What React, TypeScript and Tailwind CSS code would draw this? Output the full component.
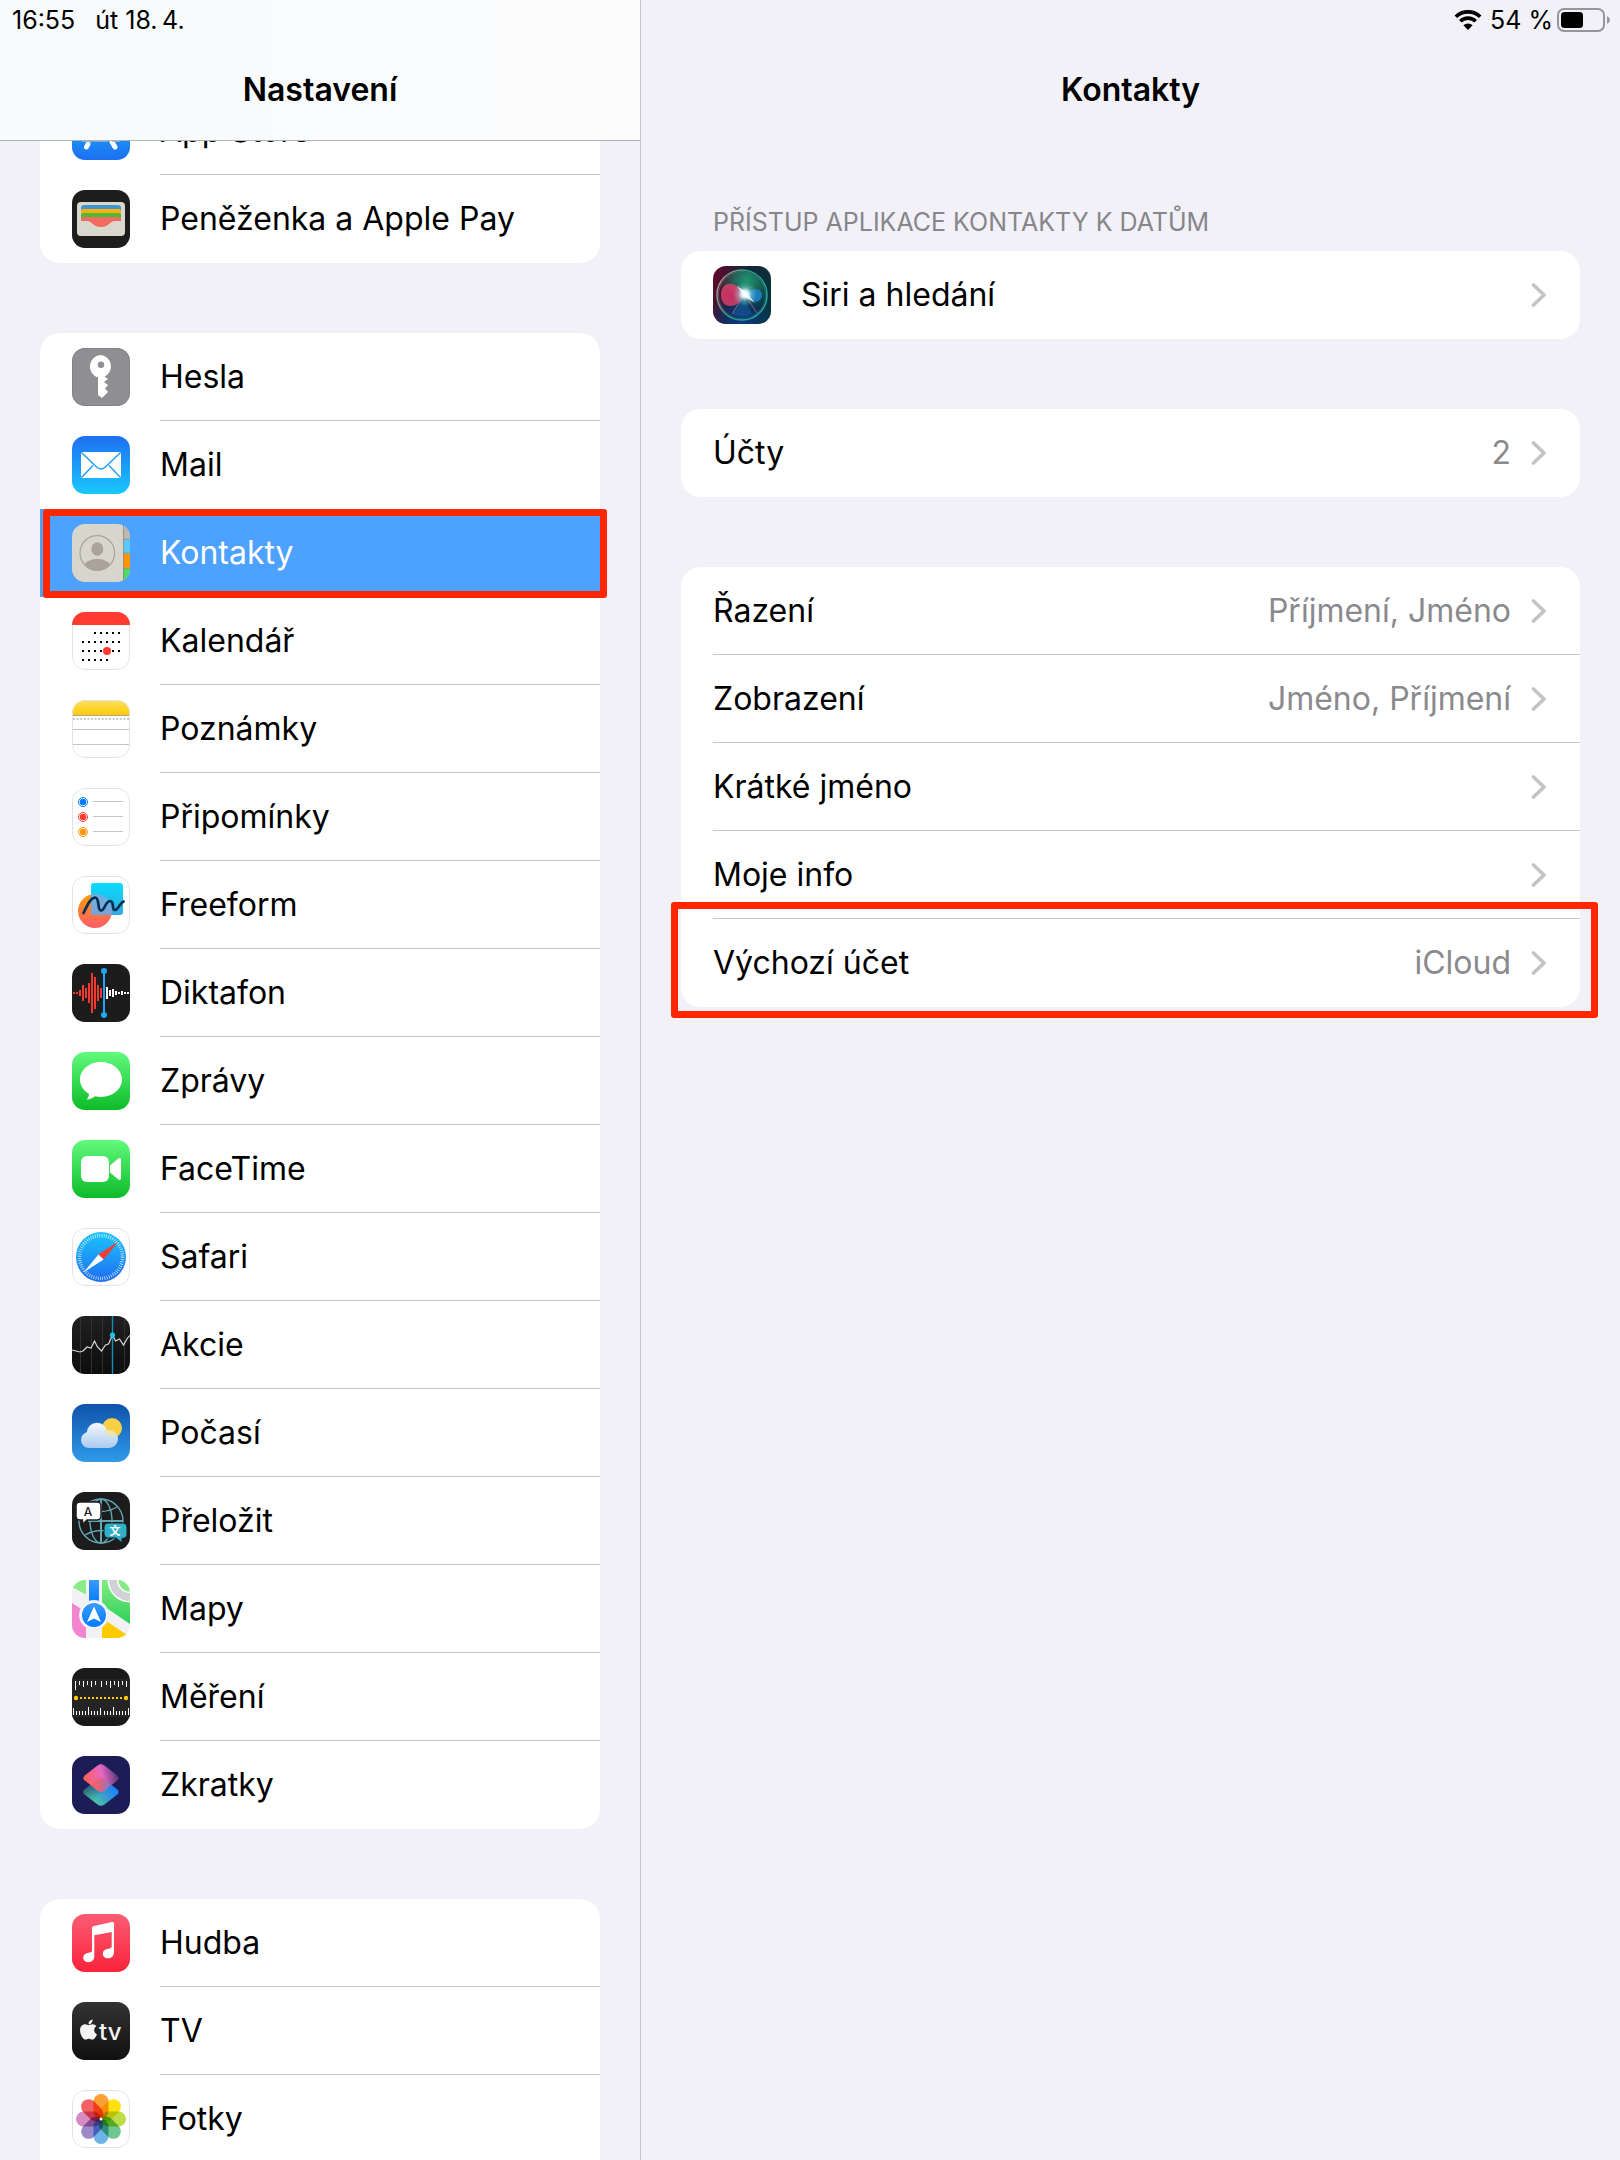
import React, { ReactNode } from "react";
import { FaApple } from "react-icons/fa";

type GradientProps = { id: string; from: string; to: string };

function VerticalGradient({ id, from, to }: GradientProps) {
  return (
    <linearGradient id={id} x1="0" y1="0" x2="0" y2="1">
      <stop offset="0" stopColor={from} />
      <stop offset="1" stopColor={to} />
    </linearGradient>
  );
}

function Tile({ children, outlined = false }: { children: ReactNode; outlined?: boolean }) {
  return (
    <svg viewBox="0 0 58 58" aria-hidden="true" className="isolate size-[58px] shrink-0 overflow-hidden rounded-[13px]">
      {children}
      {outlined && <rect x="0.5" y="0.5" width="57" height="57" rx="12.5" fill="none" stroke="#e2e2e4" />}
    </svg>
  );
}

const AppStoreIcon = () => (
  <Tile>
    <defs><VerticalGradient id="appstore" from="#19c3fb" to="#1e6ff1" /></defs>
    <rect width="58" height="58" fill="url(#appstore)" />
    <g stroke="#fff" strokeWidth="5" strokeLinecap="round">
      <path d="M27 13l14 24M40 40l3 5M31 13L19 34M16 42l-1.500 3M10 36h24M41 36h7" />
    </g>
    <path d="M10 39h26M40 39h8" stroke="#9db8cc" strokeWidth="1.500" />
  </Tile>
);

const WalletIcon = () => (
  <Tile>
    <rect width="58" height="58" fill="#1d1d1d" />
    <rect x="5" y="12" width="48" height="34" rx="4" fill="#dad7cc" />
    <path d="M9 18a3 3 0 013-3h34a3 3 0 013 3v13H9z" fill="#3c97d0" />
    <path d="M9 21a2 2 0 012-2h36a2 2 0 012 2v10H9z" fill="#fdb00b" />
    <path d="M9 25a2 2 0 012-2h36a2 2 0 012 2v6H9z" fill="#4dbb3a" />
    <path d="M9 29a2 2 0 012-2h36a2 2 0 012 2v2h-6c-6 0-5 6-14 6s-8-6-14-6H9z" fill="#f26b5e" />
  </Tile>
);

const KeyIcon = () => (
  <Tile>
    <rect width="58" height="58" fill="#8e8e93" />
    <rect x="0.5" y="0.5" width="57" height="57" rx="12.5" fill="none" stroke="#828287" />
    <path fill="#fff" fillRule="evenodd" d="M29 7a11.500 11.500 0 00-3 22.500V47l4 3 6-6-3-3.500 3-3.500-4-3 4-3-3-2v-.500A11.500 11.500 0 0029 7zm0 6.500a3.200 3.200 0 110 6.400 3.200 3.200 0 010-6.400z" />
  </Tile>
);

const MailIcon = () => (
  <Tile>
    <defs><VerticalGradient id="mail" from="#1e6ff2" to="#1ac8fc" /></defs>
    <rect width="58" height="58" fill="url(#mail)" />
    <rect x="9" y="16" width="40" height="26" rx="1.500" fill="#fff" />
    <path d="M9.500 16.500l14.500 14q5 5 10 0l14.500-14M9.500 41.500L21 29.500M48.500 41.500L37 29.500" fill="none" stroke="#1f9cf5" strokeWidth="1.400" />
  </Tile>
);

const ContactsIcon = () => (
  <Tile>
    <defs><clipPath id="contactClip"><circle cx="25.300" cy="29" r="17.500" /></clipPath></defs>
    <rect width="58" height="58" fill="#d8d5cc" />
    <rect x="51" width="7" height="15" fill="#bcb9b0" />
    <rect x="51" y="15.500" width="7" height="14" fill="#5ac8fa" />
    <rect x="51" y="29.500" width="7" height="15" fill="#ff9500" />
    <rect x="51" y="44.500" width="7" height="14" fill="#4cd964" />
    <path d="M51.500 0v58M51 15.300h7M51 29.300h7M51 44.300h7" stroke="#8d8a82" strokeWidth="0.800" />
    <circle cx="25.300" cy="29" r="17.300" fill="none" stroke="#aaa39b" strokeWidth="1.200" />
    <g clipPath="url(#contactClip)" fill="#aaa39b">
      <ellipse cx="25.300" cy="25" rx="6" ry="6.800" />
      <ellipse cx="25.300" cy="44" rx="14" ry="9.300" />
    </g>
  </Tile>
);

const calendarDots = [
  { y: 21, from: 2, to: 6 },
  { y: 30, from: 0, to: 6 },
  { y: 39, from: 0, to: 6 },
  { y: 48, from: 0, to: 4 },
];

const CalendarIcon = () => (
  <Tile>
    <rect x="0.5" y="0.5" width="57" height="57" rx="12.5" fill="#fff" stroke="#e2e2e4" />
    {calendarDots.map((row) =>
      Array.from({ length: row.to - row.from + 1 }, (_, i) => (
        <rect key={`${row.y}-${i}`} x={10 + (row.from + i) * 6} y={row.y - 1} width="2" height="2" fill="#000" />
      ))
    )}
    <circle cx="35" cy="39" r="4" fill="#ff3b30" />
    <rect width="58" height="13" fill="#ff3b30" />
  </Tile>
);

const NotesIcon = () => (
  <Tile outlined>
    <defs><VerticalGradient id="notes" from="#fde05e" to="#fccb05" /></defs>
    <rect width="58" height="58" fill="#fff" />
    <rect width="58" height="15" fill="url(#notes)" />
    <path d="M0 15.500h58" stroke="#a9a48f" />
    <path d="M1 19h58" stroke="#c9c9cb" strokeWidth="2" strokeDasharray="2 1.600" />
    <path d="M0 29.500h58M0 44.500h58" stroke="#c4c4c6" />
  </Tile>
);

const RemindersIcon = () => (
  <Tile outlined>
    <rect width="58" height="58" fill="#fff" />
    {[{ y: 14, color: "#007aff" }, { y: 29, color: "#ff3b30" }, { y: 44, color: "#ff9500" }].map((item) => (
      <g key={item.y}>
        <circle cx="11" cy={item.y} r="4.500" fill="none" stroke={item.color} />
        <circle cx="11" cy={item.y} r="3.200" fill={item.color} />
        <path d={`M21 ${item.y - 0.5}h30`} stroke="#c4c4c6" />
      </g>
    ))}
  </Tile>
);

const FreeformIcon = () => (
  <Tile outlined>
    <defs>
      <VerticalGradient id="freeformSquare" from="#06dcfd" to="#36a9e0" />
      <VerticalGradient id="freeformCircle" from="#ff9f0a" to="#ff5a6a" />
      <clipPath id="freeformClip"><rect x="19" y="7" width="32" height="32" rx="3" /></clipPath>
    </defs>
    <rect width="58" height="58" fill="#fff" />
    <circle cx="23" cy="35" r="17" fill="url(#freeformCircle)" />
    <rect x="19" y="7" width="32" height="32" rx="3" fill="url(#freeformSquare)" />
    <circle cx="23" cy="35" r="17" fill="#a99fd6" opacity="0.600" clipPath="url(#freeformClip)" />
    <path d="M11.500 37C15 30 18 22 23 21.500c5 0 2 13 6 13s4-9 9-9.500c5 0 1 9 5 9 3 0 5-7 8.500-8.500" fill="none" stroke="#003050" strokeWidth="2.700" strokeLinecap="round" />
  </Tile>
);

const redBars = [2, 2, 6, 16, 10, 20, 40, 32, 16, 10];
const whiteBars = [12, 6, 8, 4, 2, 4, 2, 2];

const VoiceMemosIcon = () => (
  <Tile>
    <rect width="58" height="58" fill="#1c1c1c" />
    {redBars.map((h, i) => (
      <rect key={i} x={1 + i * 3} y={29 - h / 2} width="2" height={h} fill="#f5392f" />
    ))}
    {whiteBars.map((h, i) => (
      <rect key={i} x={34 + i * 3} y={29 - h / 2} width="2" height={h} fill="#fff" />
    ))}
    <path d="M32 7v44" stroke="#1ba7f5" strokeWidth="2" />
    <circle cx="32" cy="7" r="3" fill="#1ba7f5" />
    <circle cx="32" cy="51" r="3" fill="#1ba7f5" />
  </Tile>
);

const MessagesIcon = () => (
  <Tile>
    <defs><VerticalGradient id="messages" from="#62fa7c" to="#0cbc29" /></defs>
    <rect width="58" height="58" fill="url(#messages)" />
    <path fill="#fff" d="M29 10C17.400 10 8 17.800 8 27.500c0 6 3.600 11.200 9 14.400-.300 2.500-1 4-2.300 5.500 3.500 0 6-1.200 8.300-3.200 1.900.500 3.900.700 6 .700 11.600 0 21-7.800 21-17.400S40.600 10 29 10z" />
  </Tile>
);

const FaceTimeIcon = () => (
  <Tile>
    <defs><VerticalGradient id="facetime" from="#62fa7c" to="#0cbc29" /></defs>
    <rect width="58" height="58" fill="url(#facetime)" />
    <rect x="9" y="16" width="28" height="26" rx="6" fill="#fff" />
    <path fill="#fff" d="M38 25.500l8-6.800c1.500-1.200 3-.700 3 1.200v18.200c0 1.900-1.500 2.400-3 1.200l-8-6.800z" />
  </Tile>
);

const SafariIcon = () => (
  <Tile outlined>
    <defs><VerticalGradient id="safari" from="#1bc5fc" to="#1f6df1" /></defs>
    <rect width="58" height="58" fill="#fff" />
    <circle cx="29" cy="29" r="25" fill="url(#safari)" />
    <circle cx="29" cy="29" r="21.500" fill="none" stroke="#fff" strokeWidth="3.500" strokeDasharray="0.700 1.551" opacity="0.850" />
    <path d="M46.500 13.500L31.500 31.500 26.500 26.500z" fill="#ff3b30" />
    <path d="M11.500 44.500L26.500 26.500 31.500 31.500z" fill="#fff" />
  </Tile>
);

const StocksIcon = () => (
  <Tile>
    <defs><VerticalGradient id="stocks" from="#202020" to="#0d0d0d" /></defs>
    <rect width="58" height="58" fill="url(#stocks)" />
    <path d="M8.500 0v58M19.500 0v58M30.500 0v58M52.500 0v58" stroke="#303030" />
    <path d="M40.500 0v58" stroke="#1390b8" strokeWidth="1.400" />
    <path d="M0 34l4 1 4 1 3-1 4-4 4 1 3.500-7 3 6 4 4 4-6 3-1 4-9 3 6 4-2 4 6 4-7 3-3" fill="none" stroke="#d8d8d8" strokeWidth="1.200" />
    <circle cx="40.500" cy="19" r="2.600" fill="#1bc4f0" />
  </Tile>
);

const WeatherIcon = () => (
  <Tile>
    <defs>
      <VerticalGradient id="weather" from="#0f52ac" to="#2f9be8" />
      <linearGradient id="cloud" gradientUnits="userSpaceOnUse" x1="0" y1="19" x2="0" y2="44">
        <stop offset="0" stopColor="#f4f8ff" />
        <stop offset="1" stopColor="#aacbee" />
      </linearGradient>
      <radialGradient id="sunGlow" gradientUnits="userSpaceOnUse" cx="40" cy="24" r="11">
        <stop offset="0.300" stopColor="#f8e287" stopOpacity="0.900" />
        <stop offset="1" stopColor="#f8e287" stopOpacity="0" />
      </radialGradient>
    </defs>
    <rect width="58" height="58" fill="url(#weather)" />
    <circle cx="40" cy="24" r="10" fill="#f9cf45" />
    <g fill="url(#cloud)">
      <circle cx="25" cy="29" r="10.300" />
      <circle cx="17" cy="36" r="8" />
      <circle cx="37" cy="35" r="9" />
      <path d="M17 34h20v10H17z" />
    </g>
    <circle cx="37" cy="35" r="9" fill="url(#sunGlow)" />
  </Tile>
);

const TranslateIcon = () => (
  <Tile>
    <rect width="58" height="58" fill="#1c1c1c" />
    <g fill="none" stroke="#64a5b4" strokeWidth="1.400">
      <circle cx="29" cy="29" r="22" />
      <ellipse cx="29" cy="29" rx="11" ry="22" />
      <path d="M13 15q16 9 32 0M13 43q16-9 32 0" />
    </g>
    <path d="M29 7v44M16 29h35" stroke="#64a5b4" strokeWidth="2" />
    <path d="M8 10h17a4 4 0 014 4v10a4 4 0 01-4 4H15l-4.500 4.500V28H8a4 4 0 01-4-4V14a4 4 0 014-4z" fill="#fff" stroke="#1c1c1c" strokeWidth="1.500" />
    <path d="M36 31h15a4 4 0 014 4v7c0 3-1.500 4-5 4.500V51l-6-5h-8a4 4 0 01-4-4v-7a4 4 0 014-4z" fill="#2fb0c7" stroke="#1c1c1c" strokeWidth="1" />
    <text x="16" y="23.500" fontSize="12" textAnchor="middle" fill="#1c1c1c" className="font-['Inter',sans-serif] font-medium">A</text>
    <text x="43" y="43" fontSize="11" textAnchor="middle" fill="#fff" className="font-['Noto_Sans_CJK_SC',sans-serif] font-bold">文</text>
  </Tile>
);

const MapsIcon = () => (
  <Tile>
    <defs>
      <VerticalGradient id="mapGreen" from="#83ec84" to="#2bd158" />
      <VerticalGradient id="mapBlue" from="#3b9bff" to="#007aff" />
    </defs>
    <rect width="58" height="58" fill="#f2f1f6" />
    <path d="M0 7V0h14v14.500z" fill="#8aec86" />
    <path d="M30 0h28v44L30 25z" fill="url(#mapGreen)" />
    <path d="M0 23l14 9v26H0z" fill="#f285cd" />
    <path d="M30 38l28 19v1H30z" fill="#fdcb00" />
    <circle cx="58" cy="0" r="22.500" fill="#fff" />
    <circle cx="58" cy="0" r="21" fill="#d1d1d6" />
    <circle cx="58" cy="0" r="13" fill="#fff" />
    <circle cx="58" cy="0" r="11.500" fill="#83ec84" />
    <rect x="17" width="10" height="24" fill="url(#mapBlue)" />
    <circle cx="22" cy="35" r="15" fill="#e9e8ef" />
    <circle cx="22" cy="35" r="14" fill="#f8f8fb" />
    <circle cx="22" cy="35" r="12" fill="url(#mapBlue)" />
    <path d="M22 26.500l7 15.500-7-3.500-7 3.500z" fill="#fff" />
  </Tile>
);

const MeasureIcon = () => (
  <Tile>
    <rect width="58" height="58" fill="#1a1a1a" />
    <rect y="11" width="58" height="38" fill="#242424" />
    <path d="M3.500 13v9M11.500 13v6M19.500 13v6M29.500 13v6M38.500 13v7M46.500 13v6M54.500 13v6" stroke="#fff" />
    <path d="M7.500 13v4M15.500 13v4M23.500 13v4M34.500 13v4M42.500 13v4M50.500 13v4" stroke="#fff" />
    <path d="M8 30h43" stroke="#fecb05" strokeWidth="2" strokeDasharray="2 2" />
    <circle cx="4" cy="30" r="2.200" fill="#fecb05" />
    <circle cx="54" cy="30" r="2.200" fill="#fecb05" />
    <path d="M1.500 40v7M16.500 39v8M28.500 40v7M41.500 39v8M56.500 40v7" stroke="#fff" />
    <path d="M4.500 43v4M7.500 43v4M10.500 43v4M13.500 43v4M19.500 43v4M22.500 43v4M25.500 43v4M32.500 43v4M35.500 43v4M38.500 43v4M44.500 43v4M47.500 43v4M50.500 43v4M53.500 43v4" stroke="#fff" />
  </Tile>
);

const ShortcutsIcon = () => (
  <Tile>
    <defs>
      <linearGradient id="shortcutTop" gradientUnits="userSpaceOnUse" x1="13" y1="26" x2="45" y2="18">
        <stop offset="0" stopColor="#fd5f52" />
        <stop offset="0.550" stopColor="#e868c4" />
        <stop offset="1" stopColor="#5b3a78" />
      </linearGradient>
      <linearGradient id="shortcutBottom" gradientUnits="userSpaceOnUse" x1="20" y1="48" x2="44" y2="32">
        <stop offset="0" stopColor="#4bd5a0" />
        <stop offset="0.500" stopColor="#3b9ecb" />
        <stop offset="1" stopColor="#1580fb" />
      </linearGradient>
      <linearGradient id="shortcutShade" gradientUnits="userSpaceOnUse" x1="10" y1="28" x2="24" y2="44">
        <stop offset="0" stopColor="#1c1c57" stopOpacity="0.800" />
        <stop offset="1" stopColor="#1c1c57" stopOpacity="0" />
      </linearGradient>
      <linearGradient id="shortcutMix" gradientUnits="userSpaceOnUse" x1="20" y1="27" x2="40" y2="29">
        <stop offset="0" stopColor="#fb625c" />
        <stop offset="0.500" stopColor="#d2668a" />
        <stop offset="1" stopColor="#5f86df" />
      </linearGradient>
    </defs>
    <rect width="58" height="58" fill="#1c1c57" />
    <path d="M25.500 23.500q3.500-2.500 7 0l12.500 9.700q3.400 2.800 0 5.600l-12.500 9.700q-3.500 2.500-7 0L13 38.800q-3.400-2.800 0-5.600z" fill="url(#shortcutBottom)" />
    <path d="M25.500 23.500q3.500-2.500 7 0l12.500 9.700q3.400 2.800 0 5.600l-12.500 9.700q-3.500 2.500-7 0L13 38.800q-3.400-2.800 0-5.600z" fill="url(#shortcutShade)" />
    <path d="M25.500 9.500q3.500-2.500 7 0L45 19.200q3.400 2.800 0 5.600l-12.500 9.700q-3.500 2.500-7 0L13 24.800q-3.400-2.800 0-5.600z" fill="url(#shortcutTop)" />
    <path d="M19.500 29L25.500 23.500q3.500-2.500 7 0l6 5-6 6q-3.500 2.500-7 0z" fill="url(#shortcutMix)" />
  </Tile>
);

const MusicIcon = () => (
  <Tile>
    <defs><VerticalGradient id="music" from="#fb5c74" to="#fa233b" /></defs>
    <rect width="58" height="58" fill="url(#music)" />
    <path fill="#fff" d="M20 14.500c0-1.500.800-2.200 2-2.500L40 8c1.400-.300 2 .300 2 1.600V38c0 4-2.500 6.300-6.200 6.300-3 0-5-1.800-5-4.600 0-2.700 1.900-4.300 5-4.900 3-.500 3.900-.900 3.900-2.800V18L22.300 21.300V42c0 4-2.500 6.200-6 6.200-3 0-5.100-1.800-5.100-4.600 0-2.700 1.900-4.300 5-4.900 3-.500 3.800-.900 3.800-2.800z" />
  </Tile>
);

const TvIcon = () => (
  <Tile>
    <defs><VerticalGradient id="tv" from="#333" to="#101010" /></defs>
    <rect width="58" height="58" fill="url(#tv)" />
    <FaApple size={23} x="5" y="16" color="#f4f4f4" />
    <text x="27" y="38" fontSize="24" fill="#f4f4f4" className="font-['Inter',sans-serif] font-medium">tv</text>
  </Tile>
);

const petals = ["#f99f33", "#fee10f", "#bcdc49", "#6fc68e", "#6db4e8", "#9d89c9", "#d68cc0", "#f26166"];

const PhotosIcon = () => (
  <Tile outlined>
    <rect width="58" height="58" fill="#fff" />
    {petals.map((color, i) => (
      <rect key={color} x="21.500" y="4" width="15" height="25" rx="7.500" fill={color} transform={`rotate(${i * 45} 29 29)`} className="mix-blend-multiply" />
    ))}
    <circle cx="29" cy="29" r="1.500" fill="#fff" />
  </Tile>
);

const SiriIcon = () => (
  <Tile>
    <defs>
      <linearGradient id="siriBase" x1="0" y1="0.300" x2="1" y2="0.600">
        <stop offset="0" stopColor="#5c0b2c" />
        <stop offset="0.450" stopColor="#15263a" />
        <stop offset="1" stopColor="#06343a" />
      </linearGradient>
      <radialGradient id="siriBlue" cx="0.500" cy="1" r="0.600">
        <stop offset="0" stopColor="#093a86" />
        <stop offset="1" stopColor="#093a86" stopOpacity="0" />
      </radialGradient>
      <radialGradient id="siriGreen" cx="0.600" cy="0.200" r="0.600">
        <stop offset="0" stopColor="#22a377" stopOpacity="0.900" />
        <stop offset="1" stopColor="#22a377" stopOpacity="0" />
      </radialGradient>
      <radialGradient id="siriPink" cx="0.400" cy="0.500" r="0.600">
        <stop offset="0" stopColor="#c92a62" />
        <stop offset="1" stopColor="#ee4a72" stopOpacity="0.700" />
      </radialGradient>
      <radialGradient id="siriGlow">
        <stop offset="0" stopColor="#fff" />
        <stop offset="0.300" stopColor="#e6fdff" stopOpacity="0.900" />
        <stop offset="0.600" stopColor="#9fe6e8" stopOpacity="0.350" />
        <stop offset="1" stopColor="#7fe6e8" stopOpacity="0" />
      </radialGradient>
      <linearGradient id="siriRing" x1="0" y1="0" x2="1" y2="0.400">
        <stop offset="0" stopColor="#d78a98" />
        <stop offset="0.500" stopColor="#2f9e7f" />
        <stop offset="1" stopColor="#26a59f" />
      </linearGradient>
    </defs>
    <rect width="58" height="58" fill="url(#siriBase)" />
    <rect width="58" height="58" fill="url(#siriBlue)" />
    <circle cx="29" cy="29" r="24" fill="url(#siriGreen)" />
    <path d="M32 29C26 17 13 14 9 23c-3 8 0 17 8 17 7 0 11-5 15-11z" fill="url(#siriPink)" />
    <path d="M31 29q8-8 15-5 6 4 1 10-6 5-16-5z" fill="#1f83cf" opacity="0.850" />
    <path d="M30 30L19 48q10 5 20 0z" fill="#1a63a8" opacity="0.450" />
    <path d="M32 29l12 18M30 30L19 48" stroke="#b9709a" fill="none" opacity="0.700" />
    <circle cx="29" cy="29" r="25" fill="none" stroke="url(#siriRing)" strokeWidth="1.500" />
    <circle cx="29" cy="29" r="23.500" fill="none" stroke="url(#siriRing)" opacity="0.400" />
    <circle cx="32" cy="28" r="12" fill="url(#siriGlow)" />
    <path d="M24 20l10 7 8 10-11-7z" fill="#fff" opacity="0.800" />
  </Tile>
);

type AppItem = {
  name: string;
  icon: () => ReactNode;
  active?: boolean;
  divider?: boolean;
};

const storeApps: AppItem[] = [
  { name: "App Store", icon: AppStoreIcon, divider: true },
  { name: "Peněženka a Apple Pay", icon: WalletIcon },
];

const systemApps: AppItem[] = [
  { name: "Hesla", icon: KeyIcon, divider: true },
  { name: "Mail", icon: MailIcon },
  { name: "Kontakty", icon: ContactsIcon, active: true },
  { name: "Kalendář", icon: CalendarIcon, divider: true },
  { name: "Poznámky", icon: NotesIcon, divider: true },
  { name: "Připomínky", icon: RemindersIcon, divider: true },
  { name: "Freeform", icon: FreeformIcon, divider: true },
  { name: "Diktafon", icon: VoiceMemosIcon, divider: true },
  { name: "Zprávy", icon: MessagesIcon, divider: true },
  { name: "FaceTime", icon: FaceTimeIcon, divider: true },
  { name: "Safari", icon: SafariIcon, divider: true },
  { name: "Akcie", icon: StocksIcon, divider: true },
  { name: "Počasí", icon: WeatherIcon, divider: true },
  { name: "Přeložit", icon: TranslateIcon, divider: true },
  { name: "Mapy", icon: MapsIcon, divider: true },
  { name: "Měření", icon: MeasureIcon, divider: true },
  { name: "Zkratky", icon: ShortcutsIcon },
];

const mediaApps: AppItem[] = [
  { name: "Hudba", icon: MusicIcon, divider: true },
  { name: "TV", icon: TvIcon, divider: true },
  { name: "Fotky", icon: PhotosIcon, divider: true },
];

type SettingItem = { label: string; value?: string; marked?: boolean };

const contactSettings: SettingItem[] = [
  { label: "Řazení", value: "Příjmení, Jméno" },
  { label: "Zobrazení", value: "Jméno, Příjmení" },
  { label: "Krátké jméno" },
  { label: "Moje info" },
  { label: "Výchozí účet", value: "iCloud", marked: true },
];

// openEnd leaves the bottom corners square for a list that runs past the window
function AppGroup({ items, openEnd = false }: { items: AppItem[]; openEnd?: boolean }) {
  return (
    <ul className={`shrink-0 bg-white ${openEnd ? "rounded-t-[20px]" : "rounded-[20px]"}`}>
      {items.map(({ name, icon: Icon, active, divider }) => (
        <li key={name} className="relative">
          <button
            type="button"
            className={`flex h-[88px] w-full cursor-pointer items-center gap-[30px] pl-8 text-left ${active ? "bg-[#4da1ff] text-white" : ""}`}>
            <Icon />
            <span className={`flex flex-1 items-center self-stretch border-b ${divider ? "border-[#c6c6c8]" : "border-transparent"}`}>
              {name}
            </span>
          </button>
          {active && (
            <span className="pointer-events-none absolute -right-[7px] top-0 -bottom-px left-[3px] rounded-[3px] border-[7px] border-[#ff2600]" />
          )}
        </li>
      ))}
    </ul>
  );
}

function Chevron() {
  return (
    <svg viewBox="0 0 16 24" fill="none" aria-hidden="true" className="h-6 w-4 shrink-0">
      <path d="M2.500 2l10.500 10-10.500 10" stroke="#c4c4c6" strokeWidth="3.700" strokeLinecap="round" strokeLinejoin="round" />
    </svg>
  );
}

function SettingGroup({ items }: { items: SettingItem[] }) {
  return (
    <ul className="rounded-[20px] bg-white">
      {items.map((item, index) => (
        <li key={item.label} className="relative pl-8">
          <button
            type="button"
            className={`flex h-[88px] w-full cursor-pointer items-center border-b pr-[33px] text-left ${index < items.length - 1 ? "border-[#c6c6c8]" : "border-transparent"}`}>
            <span className="flex-1">{item.label}</span>
            {item.value && <span className="text-[#8a8a8e]">{item.value}</span>}
            <span className="ml-5"><Chevron /></span>
          </button>
          {item.marked && (
            <span className="pointer-events-none absolute -right-[18px] -bottom-[11px] -left-[10px] -top-[17px] rounded-[3px] border-[7px] border-[#ff2600]" />
          )}
        </li>
      ))}
    </ul>
  );
}

function WifiIcon() {
  return (
    <svg viewBox="0 0 28 20" aria-hidden="true" className="h-5 w-7">
      <path d="M1.800 6.800a17.500 17.500 0 0124.400 0M6.300 11.300a11 11 0 0115.400 0" fill="none" stroke="#000" strokeWidth="3.600" />
      <path d="M14 20l-4.600-4.700a6.600 6.600 0 019.200 0z" fill="#000" />
    </svg>
  );
}

function BatteryIcon() {
  return (
    <svg viewBox="0 0 54 24" aria-hidden="true" className="h-6 w-[54px]">
      <rect x="1" y="1" width="46" height="22" rx="6" fill="none" stroke="#96969a" strokeWidth="2" />
      <rect x="4" y="4" width="22" height="16" rx="3.500" fill="#000" />
      <path d="M50 8v8q3-1.500 3-4t-3-4z" fill="#96969a" />
    </svg>
  );
}

export default function App() {
  return (
    <div className="flex h-screen overflow-hidden bg-[#f2f1f7] font-['Inter','Liberation_Sans',sans-serif] text-[32px] leading-10 text-black">
      <aside className="flex w-[641px] shrink-0 flex-col border-r border-[#c6c6c8]">
        <header className="z-10 h-[141px] shrink-0 border-b border-[#b2b2b4] bg-linear-to-r from-[#f7fbfc] to-[#fbfbfc]">
          <div className="flex h-10 items-center gap-5 pl-3 text-[25px]">
            <span>16:55</span>
            <span>út 18.&#8201;4.</span>
          </div>
          <h1 className="pt-[30px] text-center font-semibold">Nastavení</h1>
        </header>
        <nav className="-mt-[54px] flex min-h-0 flex-1 flex-col gap-[70px] px-10">
          <AppGroup items={storeApps} />
          <AppGroup items={systemApps} />
          <AppGroup items={mediaApps} openEnd />
        </nav>
      </aside>

      <main className="min-w-0 flex-1">
        <header className="h-[141px]">
          <div className="flex h-10 items-center justify-end gap-2 pr-[9px] text-[25px]">
            <WifiIcon />
            <div className="flex items-center gap-1">
              <span>54 %</span>
              <BatteryIcon />
            </div>
          </div>
          <h1 className="pt-[30px] text-center font-semibold">Kontakty</h1>
        </header>

        <div className="flex flex-col gap-[70px] px-10 pt-[61px]">
          <section>
            <h2 className="mb-[9px] pl-8 text-[25px] text-[#86868b]">PŘÍSTUP APLIKACE KONTAKTY K DATŮM</h2>
            <button type="button" className="flex h-[88px] w-full cursor-pointer items-center rounded-[20px] bg-white pr-[33px] pl-8 text-left">
              <SiriIcon />
              <span className="ml-[30px] flex-1">Siri a hledání</span>
              <Chevron />
            </button>
          </section>
          <SettingGroup items={[{ label: "Účty", value: "2" }]} />
          <SettingGroup items={contactSettings} />
        </div>
      </main>
    </div>
  );
}
